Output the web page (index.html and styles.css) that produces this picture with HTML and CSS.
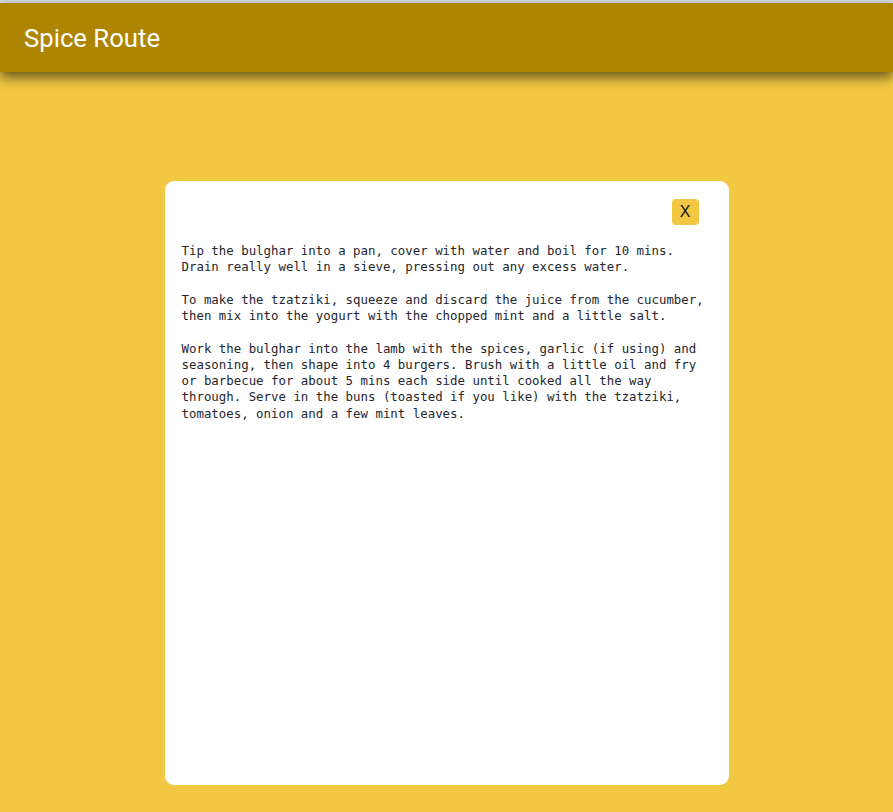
FILE: index.html
```html
<!DOCTYPE html>
<html lang="en">
<head>
<meta charset="utf-8">
<title>Spice Route</title>
<link rel="stylesheet" href="styles.css">
</head>
<body>
<div class="topstrip"></div>
<header class="appbar">
  <h1 class="title">Spice Route</h1>
</header>
<main class="stage">
  <section class="card">
    <div class="card-head">
      <button class="close">X</button>
    </div>
    <div class="method">
      <p>Tip the bulghar into a pan, cover with water and boil for 10 mins.
Drain really well in a sieve, pressing out any excess water.</p>
      <p>To make the tzatziki, squeeze and discard the juice from the cucumber,
then mix into the yogurt with the chopped mint and a little salt.</p>
      <p>Work the bulghar into the lamb with the spices, garlic (if using) and
seasoning, then shape into 4 burgers. Brush with a little oil and fry
or barbecue for about 5 mins each side until cooked all the way
through. Serve in the buns (toasted if you like) with the tzatziki,
tomatoes, onion and a few mint leaves.</p>
    </div>
  </section>
</main>
</body>
</html>
```

FILE: styles.css
```css
html, body {
  margin: 0;
  padding: 0;
  height: 100%;
  overflow: hidden;
}
body {
  background: #f2c842;
  font-family: Roboto, "Liberation Sans", sans-serif;
}
.topstrip {
  height: 3px;
  background: #d9dcdc;
}
.appbar {
  position: relative;
  z-index: 1;
  height: 69px;
  background: #ae8501;
  display: flex;
  align-items: center;
  padding-left: 24px;
  box-shadow: 0 5px 12px rgba(0, 0, 0, 0.6);
}
.title {
  margin: 0;
  color: #fff;
  font-size: 25.7px;
  font-weight: 400;
  letter-spacing: 0;
}
.stage {
  display: flex;
  justify-content: center;
  padding-top: 109px;
}
.card {
  width: 564px;
  height: 604px;
  background: #fff;
  border-radius: 9px;
  box-sizing: border-box;
  padding: 18px 12px 16px 17px;
}
.card-head {
  display: flex;
  justify-content: flex-end;
  padding-right: 18px;
}
.close {
  width: 27px;
  height: 26px;
  padding: 0;
  border: none;
  border-radius: 4px;
  background: #f2c842;
  color: #111;
  font-family: "Liberation Sans", Arial, sans-serif;
  font-size: 16px;
  line-height: 26px;
  cursor: pointer;
}
.method {
  margin-top: 18px;
  font-family: "DejaVu Sans Mono", monospace;
  font-size: 12.4px;
  line-height: 16.25px;
  color: #26262e;
}
.method p {
  margin: 0 0 16.25px 0;
  white-space: pre-line;
}
```
